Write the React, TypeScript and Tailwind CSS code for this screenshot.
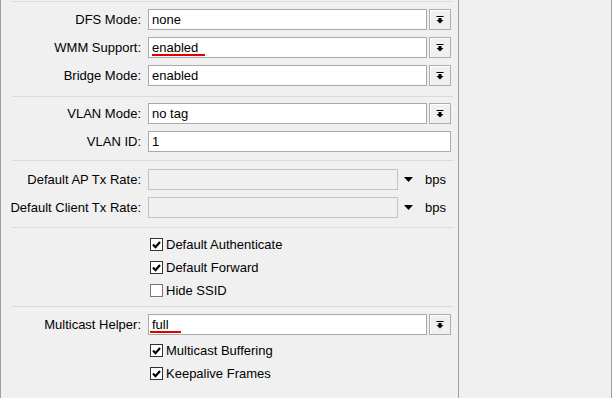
import React from "react";

const DropIcon = () => (
  <svg width="8" height="8" viewBox="0 0 8 8">
    <rect x="0.5" y="0" width="7" height="1" fill="#000" />
    <rect x="2.5" y="2" width="3" height="2" fill="#000" />
    <polygon points="0.5,4 7.5,4 4,7.5" fill="#000" />
  </svg>
);

const Sep = ({ className = "" }: { className?: string }) => (
  <div className={`ml-[11px] h-px w-[441px] bg-[#dadada] ${className}`} />
);

const Label = ({ text }: { text: string }) => (
  <div className="w-[142px] shrink-0 pr-[2px] text-right">{text}</div>
);

const SelectRow = ({
  label,
  value,
  underline,
  underlineLeft = 2,
}: {
  label: string;
  value: string;
  underline?: number;
  underlineLeft?: number;
}) => (
  <div className="flex h-[21px] items-center">
    <Label text={label} />
    <div className="relative ml-[5px] flex h-[21px] w-[279px] items-center border border-[#a9a9a9] bg-white pl-[3px]">
      {value}
      {underline && (
        <span
          className="absolute bottom-[1px] h-[2px] bg-[#e00000]"
          style={{ width: underline, left: underlineLeft }}
        />
      )}
    </div>
    <div className="ml-[2px] flex h-[21px] w-[22px] items-center justify-center border border-[#adadad] bg-[#f0f0f0] shadow-[inset_1px_1px_0_#fff]">
      <DropIcon />
    </div>
  </div>
);

const RateRow = ({ label }: { label: string }) => (
  <div className="flex h-[21px] items-center">
    <Label text={label} />
    <div className="ml-[5px] h-[21px] w-[250px] border border-[#c3c3c3] bg-[#f0f0f0]" />
    <svg width="9" height="5" viewBox="0 0 9 5" className="ml-[6px]">
      <polygon points="0,0 9,0 4.5,5" fill="#000" />
    </svg>
    <span className="ml-[12px]">bps</span>
  </div>
);

const Check = ({ label, checked }: { label: string; checked: boolean }) => (
  <div className="flex h-[23px] items-center pl-[149px]">
    <div
      className={`flex h-[13px] w-[13px] items-center justify-center border bg-white ${
        checked ? "border-[#333]" : "border-[#777]"
      }`}
    >
      {checked && (
        <svg width="9" height="8" viewBox="0 0 9 8">
          <path d="M1 3.5 L3.5 6.2 L8 1" stroke="#000" strokeWidth="2.2" fill="none" />
        </svg>
      )}
    </div>
    <span className="ml-[3px]">{label}</span>
  </div>
);

export default function App() {
  return (
    <div
      className="flex h-[398px] w-[612px] bg-[#f0f0f0] text-[13px] leading-none text-black"
      style={{ fontFamily: '"Liberation Sans", Arial, sans-serif' }}
    >
      <div className="h-full w-[459px] shrink-0 border-x border-[#a0a0a0]">
        <Sep className="mt-px" />
        <div className="mt-[7px] flex flex-col gap-[7px]">
          <SelectRow label="DFS Mode:" value="none" />
          <SelectRow label="WMM Support:" value="enabled" underline={53} underlineLeft={3} />
          <SelectRow label="Bridge Mode:" value="enabled" />
        </div>
        <Sep className="mt-[10px]" />
        <div className="mt-[6px] flex flex-col gap-[7px]">
          <SelectRow label="VLAN Mode:" value="no tag" />
          <div className="flex h-[21px] items-center">
            <Label text="VLAN ID:" />
            <div className="ml-[5px] flex h-[21px] w-[303px] items-center border border-[#a9a9a9] bg-white pl-[3px]">
              1
            </div>
          </div>
        </div>
        <Sep className="mt-[8px]" />
        <div className="mt-[8px] flex flex-col gap-[7px]">
          <RateRow label="Default AP Tx Rate:" />
          <RateRow label="Default Client Tx Rate:" />
        </div>
        <Sep className="mt-[9px]" />
        <div className="mt-[5px]">
          <Check label="Default Authenticate" checked />
          <Check label="Default Forward" checked />
          <Check label="Hide SSID" checked={false} />
        </div>
        <Sep className="mt-[4px]" />
        <div className="mt-[7px]">
          <SelectRow label="Multicast Helper:" value="full" underline={31} underlineLeft={1} />
        </div>
        <div className="mt-[4px]">
          <Check label="Multicast Buffering" checked />
          <Check label="Keepalive Frames" checked />
        </div>
      </div>
      <div className="h-full flex-1 border-r border-[#a0a0a0]" />
    </div>
  );
}
